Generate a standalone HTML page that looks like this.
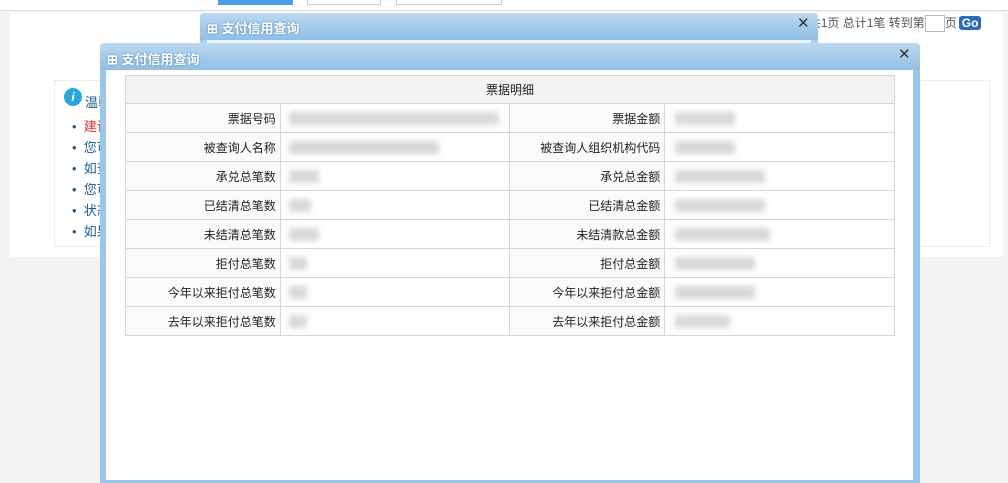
<!DOCTYPE html>
<html><head><meta charset="utf-8"><style>
*{margin:0;padding:0;box-sizing:border-box}
body{width:1008px;height:478px;overflow:hidden;background:#f3f3f3;position:relative;font-family:"Liberation Sans","Noto Sans CJK SC",sans-serif;font-size:12px;color:#333}
.abs{position:absolute}
.hdr{background:linear-gradient(#bcd9f0,#8fbfe4);color:#fff;font-weight:bold;font-size:13px;text-shadow:0 0 2px #4a7fb0}
td{border:1px solid #d6d6d6;height:29px;padding:0 4px;font-size:12px;color:#222}
td.l{text-align:right;width:155px;background:#fafafa}
td.v{width:230px;background:#fff;position:relative}
.b{position:absolute;top:8px;height:13px;background:#d8d8d8;filter:blur(3px)}
</style></head><body>
<div class="abs" style="left:0;top:0;width:1008px;height:11px;background:#fff;border-bottom:1px solid #ddd"></div>
<div class="abs" style="left:218px;top:0;width:75px;height:5px;background:#4a9ee8"></div>
<div class="abs" style="left:307px;top:0;width:74px;height:5px;border:1px solid #ccc;border-top:none"></div>
<div class="abs" style="left:396px;top:0;width:106px;height:5px;border:1px solid #ccc;border-top:none"></div>
<div class="abs" style="left:10px;top:12px;width:993px;height:245px;background:#fff"></div>
<div class="abs" style="left:54px;top:80px;width:936px;height:167px;border:1px dotted #ddd"></div>
<div class="abs" style="left:64px;top:88px;width:18px;height:18px;border-radius:50%;background:#2aa6d8;color:#fff;font-weight:bold;text-align:center;line-height:18px;font-style:italic">i</div>
<div class="abs" style="left:85px;top:92px;color:#1d5b8c;font-size:13px">温馨</div>
<div class="abs" style="left:72px;top:116px;line-height:21px;font-size:13px;color:#1d5b8c">
<div>•&nbsp; <span style="color:#d33">建议</span></div><div>•&nbsp; 您可</div><div>•&nbsp; 如查</div><div>•&nbsp; 您可</div><div>•&nbsp; 状态</div><div>•&nbsp; 如果</div></div>
<div class="abs" style="left:770px;top:14px;font-size:12px;color:#555;white-space:nowrap"><span style="color:#bbb">1 最1</span>&nbsp;&nbsp; 共1页 总计1笔 转到第<span style="display:inline-block;width:20px;height:17px;border:1px solid #bbb;vertical-align:middle;background:#fff"></span>页<span style="display:inline-block;background:#2c6bb8;color:#fff;font-weight:bold;border-radius:3px;padding:0 3px;margin-left:2px">Go</span></div>
<!-- back dialog -->
<div class="abs" style="left:200px;top:13px;width:618px;height:60px;background:#a9cfee;border-radius:4px 4px 0 0"></div>
<div class="abs hdr" style="left:200px;top:13px;width:618px;height:27px;border-radius:4px 4px 0 0;padding:5px 0 0 7px">⊞ 支付信用查询</div>
<div class="abs" style="left:797px;top:14px;color:#333;font-size:15px">✕</div>
<div class="abs" style="left:207px;top:40px;width:604px;height:33px;background:#eef4fa"></div>
<div class="abs" style="left:253px;top:60px;color:#c5d5e5;font-size:13px">支付信用查询结果</div>
<!-- front dialog -->
<div class="abs" style="left:100px;top:43px;width:820px;height:440px;background:#9cc6e8;border-radius:4px 4px 0 0"></div>
<div class="abs hdr" style="left:100px;top:43px;width:820px;height:27px;border-radius:4px 4px 0 0;padding:6px 0 0 7px">⊞ 支付信用查询</div>
<div class="abs" style="left:898px;top:45px;color:#333;font-size:15px">✕</div>
<div class="abs" style="left:106px;top:70px;width:807px;height:410px;background:#fff"></div>
<table class="abs" style="left:125px;top:75px;width:770px;border-collapse:collapse">
<tr><td colspan="4" style="text-align:center;background:#f3f3f3;height:28px">票据明细</td></tr>
<tr><td class="l">票据号码</td><td class="v"><div class="b" style="left:8px;width:210px"></div></td><td class="l">票据金额</td><td class="v"><div class="b" style="left:10px;width:60px"></div></td></tr>
<tr><td class="l">被查询人名称</td><td class="v"><div class="b" style="left:8px;width:150px"></div></td><td class="l">被查询人组织机构代码</td><td class="v"><div class="b" style="left:10px;width:60px"></div></td></tr>
<tr><td class="l">承兑总笔数</td><td class="v"><div class="b" style="left:8px;width:30px"></div></td><td class="l">承兑总金额</td><td class="v"><div class="b" style="left:10px;width:90px"></div></td></tr>
<tr><td class="l">已结清总笔数</td><td class="v"><div class="b" style="left:8px;width:22px"></div></td><td class="l">已结清总金额</td><td class="v"><div class="b" style="left:10px;width:90px"></div></td></tr>
<tr><td class="l">未结清总笔数</td><td class="v"><div class="b" style="left:8px;width:30px"></div></td><td class="l">未结清款总金额</td><td class="v"><div class="b" style="left:10px;width:95px"></div></td></tr>
<tr><td class="l">拒付总笔数</td><td class="v"><div class="b" style="left:8px;width:18px"></div></td><td class="l">拒付总金额</td><td class="v"><div class="b" style="left:10px;width:80px"></div></td></tr>
<tr><td class="l">今年以来拒付总笔数</td><td class="v"><div class="b" style="left:8px;width:18px"></div></td><td class="l">今年以来拒付总金额</td><td class="v"><div class="b" style="left:10px;width:80px"></div></td></tr>
<tr><td class="l">去年以来拒付总笔数</td><td class="v"><div class="b" style="left:8px;width:18px"></div></td><td class="l">去年以来拒付总金额</td><td class="v"><div class="b" style="left:10px;width:55px"></div></td></tr>
</table>
</body></html>
